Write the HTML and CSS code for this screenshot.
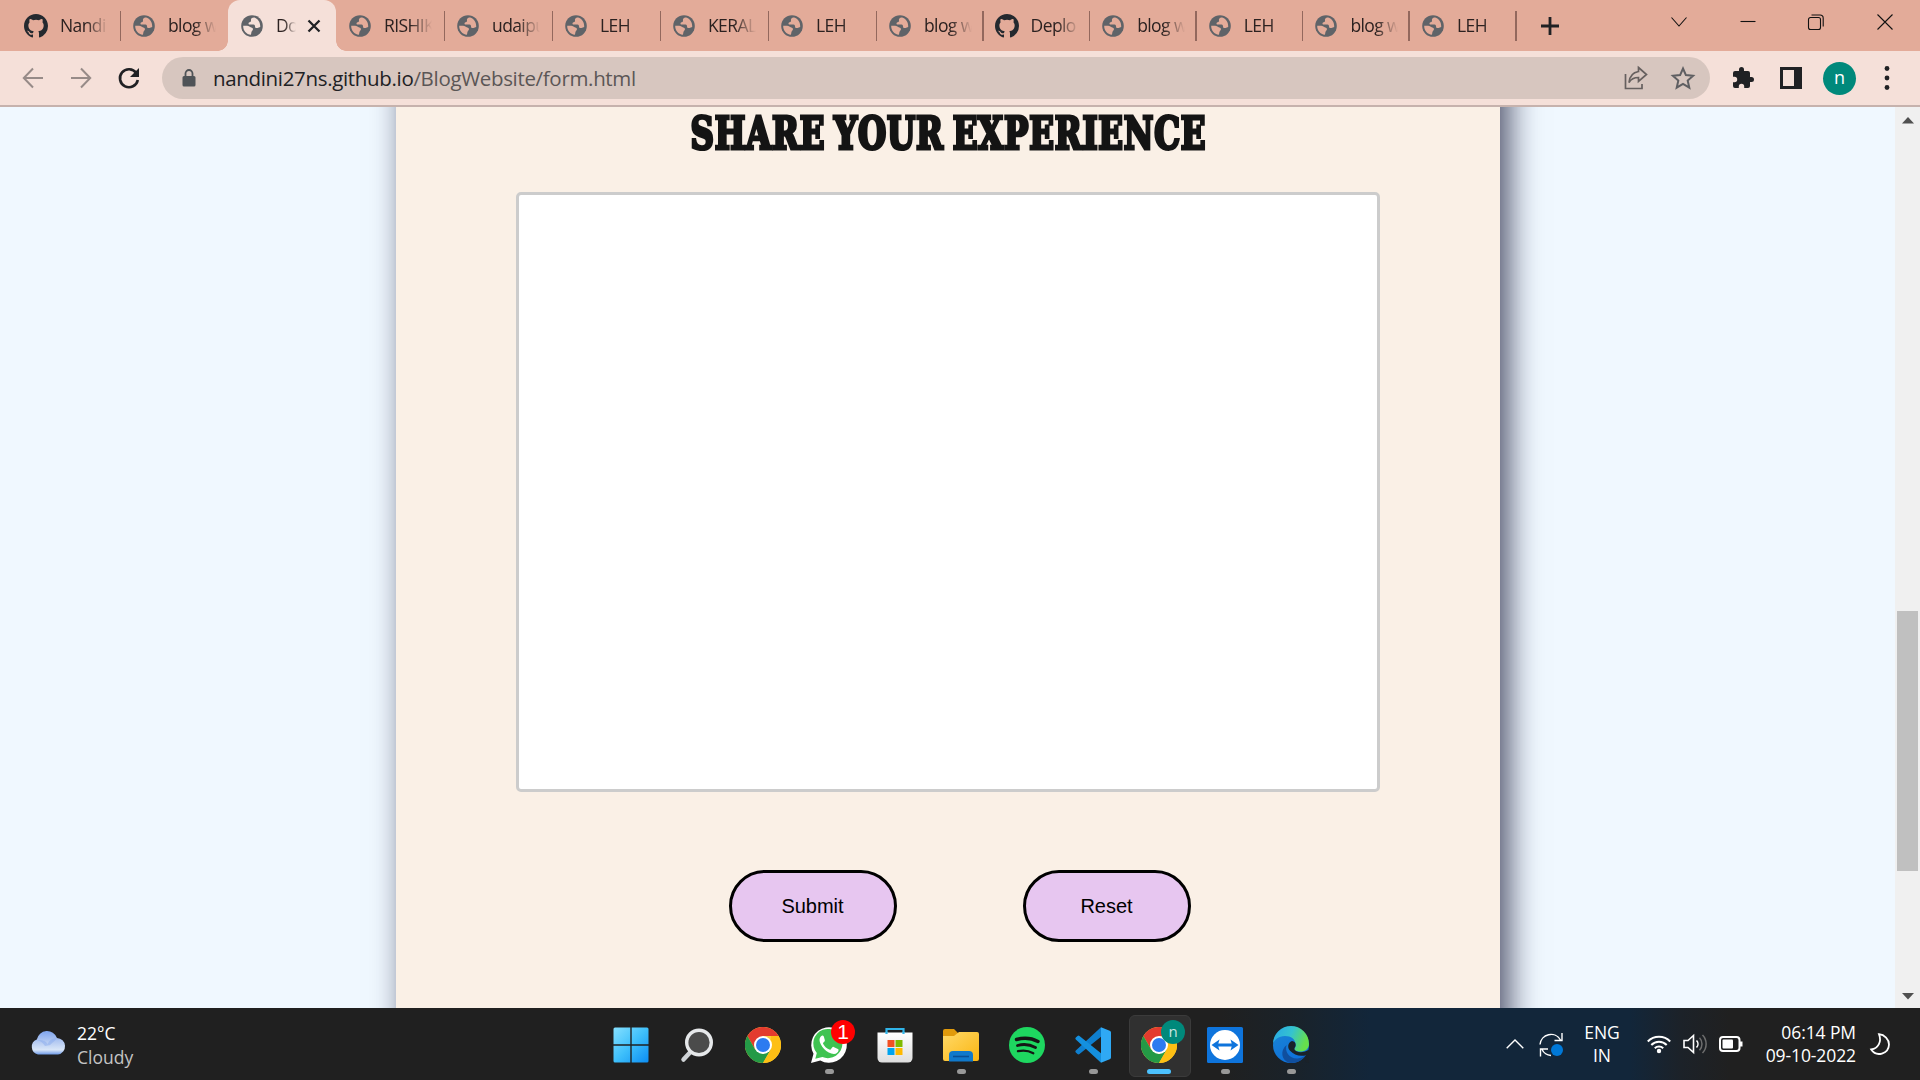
FILE: index.html
```html
<!DOCTYPE html>
<html lang="en">
<head>
<meta charset="utf-8">
<title>Document</title>
<link rel="stylesheet" href="styles.css">
</head>
<body>
<svg class="defs" aria-hidden="true">
  <defs>
    <symbol id="github" viewBox="0 0 16 16"><path fill="#24292f" d="M8 0C3.58 0 0 3.58 0 8c0 3.54 2.29 6.53 5.47 7.59.4.07.55-.17.55-.38 0-.19-.01-.82-.01-1.49-2.01.37-2.53-.49-2.69-.94-.09-.23-.48-.94-.82-1.13-.28-.15-.68-.52-.01-.53.63-.01 1.08.58 1.23.82.72 1.21 1.87.87 2.33.66.07-.52.28-.87.51-1.07-1.78-.2-3.64-.89-3.64-3.95 0-.87.31-1.59.82-2.15-.08-.2-.36-1.02.08-2.12 0 0 .67-.21 2.2.82a7.6 7.6 0 0 1 4 0c1.53-1.04 2.2-.82 2.2-.82.44 1.1.16 1.92.08 2.12.51.56.82 1.27.82 2.15 0 3.07-1.87 3.75-3.65 3.95.29.25.54.73.54 1.48 0 1.07-.01 1.93-.01 2.2 0 .21.15.46.55.38A8.01 8.01 0 0 0 16 8c0-4.42-3.58-8-8-8z"/></symbol>
    <symbol id="globe" viewBox="0 0 22 22"><circle cx="11" cy="11" r="10.8" fill="#5f6368"/><path class="land" d="M13.2 2.4c-3 .2-3.4 1.5-3.2 3 .1 1-.4 1.500-1.500 1.800-1.300.4-1.200 1.400-.6 2.300l4.600.1c1.300.1 1.500 1.300 1.600 2.300.2 1.200 1.400 1.400 2.400 1.100l2.700-1c.4-4.700-2.300-8.400-6-9.600zM2.200 10.800c-.2 4.600 3 8.500 7.700 9 .5-1.600.3-2.800.9-3.600.8-.9 1.500-1.600 1-2.700-.4-.7-1.300-.9-2.100-1.300-1.300-.7-2-1.500-3.500-1.500z"/></symbol>
    <symbol id="chrome" viewBox="0 0 36 36"><circle cx="18" cy="18" r="18" fill="#ffcd40"/><path fill="#e33b2e" d="M2.400 9A18 18 0 0 1 33.600 9H18L10.200 22.500z"/><path fill="#249a46" d="M2.400 9A18 18 0 0 0 18 36l7.800-13.500L18 27l-7.800-4.500z"/><path fill="#fdbf14" d="M33.600 9A18 18 0 0 1 18 36l7.800-13.500V9z"/><circle cx="18" cy="18" r="9" fill="#fff"/><circle cx="18" cy="18" r="7" fill="#2c7bf0"/></symbol>
    <linearGradient id="gWin" x1="0" y1="0" x2="1" y2="1"><stop offset="0" stop-color="#86e0ff"/><stop offset=".5" stop-color="#3fc0fb"/><stop offset="1" stop-color="#0b8df3"/></linearGradient>
    <linearGradient id="gCloud" x1="0" y1="0" x2="0" y2="1"><stop offset="0" stop-color="#7fa5ee"/><stop offset=".5" stop-color="#b9cdf2"/><stop offset=".8" stop-color="#d9e6f8"/><stop offset="1" stop-color="#6f9be8"/></linearGradient>
    <linearGradient id="gFolder" x1="0" y1="0" x2="1" y2="1"><stop offset="0" stop-color="#ffd968"/><stop offset="1" stop-color="#fbb612"/></linearGradient>
    <linearGradient id="gEdge" x1="0" y1="0" x2="1" y2=".3"><stop offset="0" stop-color="#26a6e8"/><stop offset=".55" stop-color="#35c3cf"/><stop offset="1" stop-color="#66e04c"/></linearGradient>
    <linearGradient id="gEdge2" x1="0" y1="0" x2=".6" y2="1"><stop offset="0" stop-color="#1b86d3"/><stop offset="1" stop-color="#0d6fdb"/></linearGradient>
    <linearGradient id="gBag" x1="0" y1="0" x2="0" y2="1"><stop offset="0" stop-color="#fff"/><stop offset="1" stop-color="#dedede"/></linearGradient>
  </defs>
</svg>

<div class="screen">
  <header class="tabstrip">
    <div class="tabs">
      <div class="tab"><svg class="fav gh"><use href="#github"/></svg><span class="title">Nandi</span></div>
      <div class="tab last"><svg class="fav"><use href="#globe"/></svg><span class="title">blog w</span></div>
      <div class="tab active"><svg class="fav"><use href="#globe"/></svg><span class="title">Do</span><svg class="close" viewBox="0 0 14 14"><path d="M1.500 1.500l11 11M12.500 1.500l-11 11"/></svg></div>
      <div class="tab"><svg class="fav"><use href="#globe"/></svg><span class="title">RISHIK</span></div>
      <div class="tab"><svg class="fav"><use href="#globe"/></svg><span class="title">udaipu</span></div>
      <div class="tab"><svg class="fav"><use href="#globe"/></svg><span class="title">LEH</span></div>
      <div class="tab"><svg class="fav"><use href="#globe"/></svg><span class="title">KERAL</span></div>
      <div class="tab"><svg class="fav"><use href="#globe"/></svg><span class="title">LEH</span></div>
      <div class="tab narrow"><svg class="fav"><use href="#globe"/></svg><span class="title">blog w</span></div>
      <div class="tab narrow"><svg class="fav gh"><use href="#github"/></svg><span class="title">Deplo</span></div>
      <div class="tab narrow"><svg class="fav"><use href="#globe"/></svg><span class="title">blog w</span></div>
      <div class="tab narrow"><svg class="fav"><use href="#globe"/></svg><span class="title">LEH</span></div>
      <div class="tab narrow"><svg class="fav"><use href="#globe"/></svg><span class="title">blog w</span></div>
      <div class="tab narrow"><svg class="fav"><use href="#globe"/></svg><span class="title">LEH</span></div>
    </div>
    <svg class="newtab" viewBox="0 0 18 18"><path d="M9 0v18M0 9h18"/></svg>
    <div class="winctl">
      <svg viewBox="0 0 16 16"><path d="M.5 3.500L8 12l7.500-8.500"/></svg>
      <svg viewBox="0 0 16 16"><path d="M.5 7.500h15"/></svg>
      <svg viewBox="0 0 16 16"><path d="M2.500 3.500h8a2 2 0 0 1 2 2v8a2 2 0 0 1-2 2h-8a2 2 0 0 1-2-2v-8a2 2 0 0 1 2-2zM3.500 1h8.500a3.200 3.200 0 0 1 3.200 3.200V12.500"/></svg>
      <svg viewBox="0 0 16 16"><path d="M.5.500l15 15M15.500.5l-15 15"/></svg>
    </div>
  </header>

  <div class="toolbar">
    <nav class="nav">
      <svg class="dim" viewBox="0 0 22 22"><path d="M21 11H2M11 1.500L1.800 11l9.200 9.500"/></svg>
      <svg class="dim" viewBox="0 0 22 22"><path d="M1 11h19M11 1.500l9.200 9.500-9.200 9.500"/></svg>
      <svg class="reload" viewBox="0 0 22 22"><path d="M18.300 6A9 9 0 1 0 19.800 13"/><path class="fill" d="M21 1v9h-9z"/></svg>
    </nav>
    <div class="omnibox">
      <svg class="lock" viewBox="0 0 14 18"><path fill="#4f5357" d="M2 7h10a1.500 1.500 0 0 1 1.500 1.500v7.500a1.500 1.500 0 0 1-1.500 1.500H2A1.500 1.500 0 0 1 .5 16V8.500A1.500 1.500 0 0 1 2 7z"/><path fill="none" stroke="#4f5357" stroke-width="1.800" d="M3.500 7V4.500a3.500 3.500 0 0 1 7 0V7"/></svg>
      <span class="url">nandini27ns.github.io<span class="path">/BlogWebsite/form.html</span></span>
      <svg class="share" viewBox="0 0 24 24"><path d="M1.500 8v14.500h16.500V18M14.500 1.500l8 7-8 7v-4c-5 0-7.500 1.500-9.500 5 .5-5.500 3.500-10 9.500-11z"/></svg>
      <svg class="star" viewBox="0 0 24 24"><path d="M12 2.500l2.900 6.600 7.200.7-5.400 4.800 1.600 7.100L12 18l-6.300 3.700 1.600-7.100L1.900 9.800l7.200-.7z"/></svg>
    </div>
    <div class="actions">
      <svg class="puzzle" viewBox="0 0 24 24"><path d="M20.500 11H19V7a2 2 0 0 0-2-2h-4V3.500a2.500 2.500 0 0 0-5 0V5H4a2 2 0 0 0-2 2v3.800h1.500a2.700 2.700 0 0 1 0 5.400H2V20a2 2 0 0 0 2 2h3.800v-1.500a2.700 2.700 0 0 1 5.400 0V22H17a2 2 0 0 0 2-2v-4h1.500a2.500 2.500 0 0 0 0-5z"/></svg>
      <svg class="panel" viewBox="0 0 22 22"><path d="M0 0h22v22H0zM3 3v16h11V3z" fill-rule="evenodd"/></svg>
      <span class="avatar">n</span>
      <svg class="dots" viewBox="0 0 6 26"><circle cx="3" cy="3.500" r="2.400"/><circle cx="3" cy="13" r="2.400"/><circle cx="3" cy="22.500" r="2.400"/></svg>
    </div>
  </div>

  <div class="viewport">
    <main class="page">
      <section class="card">
        <h1><span>SHARE YOUR EXPERIENCE</span></h1>
        <div class="textarea"></div>
        <div class="buttons"><button>Submit</button><button>Reset</button></div>
      </section>
    </main>
    <div class="scrollbar">
      <svg viewBox="0 0 12 7"><path d="M6 0l6 6.500H0z"/></svg>
      <div class="thumb"></div>
      <svg viewBox="0 0 12 7"><path d="M6 6.500L0 0h12z"/></svg>
    </div>
  </div>

  <footer class="taskbar">
    <div class="weather">
      <svg viewBox="0 0 36 24"><path fill="url(#gCloud)" d="M8 23.500a7.800 7.800 0 0 1-1.200-14.900A10.500 10.500 0 0 1 27 7a8.300 8.300 0 0 1 1 16.500z"/><path fill="#8aaced" opacity=".5" d="M7 9c5-.5 9 1 10.500 4 2-4 5-6 9.500-6-2 3-4 4-7 7l-5 1c-2-3-4-5-8-6z"/></svg>
      <div><div class="deg">22°C</div><div class="cond">Cloudy</div></div>
    </div>
    <div class="apps">
      <div class="app"><svg viewBox="0 0 36 36"><path fill="url(#gWin)" d="M2 .5h15.300v16.800H.5V2A1.500 1.500 0 0 1 2 .5zM18.700.5H34A1.500 1.500 0 0 1 35.500 2v15.300H18.700zM.5 18.700h16.800v16.800H2A1.500 1.500 0 0 1 .5 34zM18.700 18.700h16.800V34a1.500 1.500 0 0 1-1.500 1.500H18.700z"/></svg></div>
      <div class="app"><svg viewBox="0 0 36 36"><path stroke="#cfd3d6" stroke-width="4.500" stroke-linecap="round" d="M11 25.500l-6.500 7"/><circle cx="20" cy="15.500" r="12.300" fill="#4b4b4b" stroke="#e6e8ea" stroke-width="3.400"/></svg></div>
      <div class="app"><svg><use href="#chrome"/></svg></div>
      <div class="app run"><svg viewBox="0 0 36 36"><path fill="#fff" d="M0 36l2.500-9.300A17.800 17.800 0 1 1 9.300 33.500z"/><path fill="#3fc351" d="M4.300 31.700l1.500-5.600a14.600 14.600 0 1 1 5.600 4z"/><path fill="#fff" d="M12.800 9.500c-.5-1-1.300-1-2-.8-1 .5-2.300 2-2.300 4.300 0 5 7.500 14 14.500 14 2.500 0 4.300-2 4.500-3.500.1-.8 0-1.200-.6-1.500l-4.300-2c-.6-.3-1-.1-1.400.4l-1.600 2c-.4.400-.8.400-1.300.200-2.800-1.200-4.900-3.300-6.200-5.800-.2-.5-.1-.8.300-1.200 1-1.100 1.800-1.900 1.400-2.700z"/></svg><span class="badge red">1</span></div>
      <div class="app"><svg viewBox="0 0 36 36"><path fill="none" stroke="#30b4e8" stroke-width="2.200" d="M9.500 9V2h17v7"/><path fill="url(#gBag)" d="M.5 5.500h35V31a4.500 4.500 0 0 1-4.500 4.500H5A4.500 4.500 0 0 1 .5 31z"/><path fill="none" stroke="#30b4e8" stroke-width="2.200" d="M9.500 7V5M26.500 7V5"/><path fill="#f25022" d="M10.500 13h7v7h-7z"/><path fill="#7fba00" d="M18.500 13h7v7h-7z"/><path fill="#00a4ef" d="M10.500 21h7v7h-7z"/><path fill="#ffb900" d="M18.500 21h7v7h-7z"/></svg></div>
      <div class="app run"><svg viewBox="0 0 36 36"><path fill="#e09a0c" d="M0 4a2 2 0 0 1 2-2h9l4 4v6H0z"/><path fill="url(#gFolder)" d="M0 9h11l5-4h18a2 2 0 0 1 2 2v25a2 2 0 0 1-2 2H2a2 2 0 0 1-2-2z"/><path fill="#1079cb" d="M6 34.500V28a4 4 0 0 1 4-4h16a4 4 0 0 1 4 4v6.500z"/><path stroke="#0a4f94" stroke-width="1.600" d="M10 29.500h16"/></svg></div>
      <div class="app"><svg viewBox="0 0 36 36"><circle cx="18" cy="18" r="18" fill="#1ed760"/><path fill="none" stroke="#151515" stroke-linecap="round" stroke-width="3.400" d="M7.500 12.500c7-2 15-1.500 21.500 2"/><path fill="none" stroke="#151515" stroke-linecap="round" stroke-width="2.800" d="M8.500 18.500c6-1.700 12.500-1 18 2"/><path fill="none" stroke="#151515" stroke-linecap="round" stroke-width="2.300" d="M9 24.200c5.500-1.300 10.500-.7 15.300 2"/></svg></div>
      <div class="app run"><svg viewBox="0 0 36 36"><path fill="#0f7fcf" d="M.8 23.500L26 .3v9.500L4.500 27a1.500 1.500 0 0 1-2 0L.8 25.500a1.400 1.400 0 0 1 0-2z"/><path fill="#1490df" d="M.8 12.500L26 35.700v-9.500L4.500 9a1.500 1.500 0 0 0-2 0L.8 10.500a1.400 1.400 0 0 0 0 2z"/><path fill="#2fa9f4" d="M26 .3l8.700 3.400c.8.300 1.300 1 1.300 1.800v25c0 .8-.5 1.500-1.300 1.800L26 35.700z"/></svg></div>
      <div class="app current"><svg><use href="#chrome"/></svg><span class="badge teal">n</span></div>
      <div class="app run"><svg viewBox="0 0 36 36"><rect width="36" height="36" rx="1.500" fill="#0e74dc"/><circle cx="18" cy="18" r="15" fill="#fff"/><path fill="#0e74dc" d="M4.500 18l8-5.500-1.200 4h13.400l-1.200-4 8 5.500-8 5.500 1.200-4H11.300l1.200 4z"/></svg></div>
      <div class="app run"><svg viewBox="0 0 36 36"><circle cx="18" cy="18" r="18" fill="url(#gEdge2)"/><path fill="#104f9e" d="M13.500 18c-2 7 3 14 11 13.500 4-.2 7-2 8.800-4A18 18 0 0 1 17 36C8 34 7 23 13.500 18z"/><path fill="url(#gEdge)" d="M0 17A18 18 0 0 1 36 17c0 5-4 7.500-8.500 7.500-4 0-6.500-1.300-6.300-2.300.2-.8 1.500-1.500 1.500-4C22.700 12 18 9 12 9 5.500 9 1 13 0 17z"/><path fill="#1a2229" d="M21.300 22c.7 3 7.700 4.500 13 1.500.6-.3 1.300-.2 1.700.5V36l-4-1 1.800-7c-6 2-12.500.5-17-4.500-3.300-4-.8-9 2.200-9.500 2.500.2 3.700 2 3.700 4 0 1.800-1.200 2.500-1.400 4z"/></svg></div>
    </div>
    <div class="tray">
      <svg class="up" viewBox="0 0 18 10"><path d="M.7 9.300L9 1l8.300 8.300"/></svg>
      <svg class="sync" viewBox="0 0 24 24"><path d="M1 12.500A11 11 0 0 1 21.500 8M23 1v7.500h-7.500M12 23.500A11 11 0 0 1 3 17.500M1.500 24.500V17H9"/><circle cx="18" cy="18" r="6" fill="#0078d7" stroke="none"/></svg>
      <div class="lang">ENG<br>IN</div>
      <svg class="wifi" viewBox="0 0 24 20"><g stroke-width="2"><path d="M.8 7.500a15.500 15.500 0 0 1 22.400 0M4.300 11a10.800 10.800 0 0 1 15.400 0M7.800 14.300a6 6 0 0 1 8.400 0"/></g><circle cx="12" cy="17" r="2.200" fill="#fff" stroke="none"/></svg>
      <svg class="vol" viewBox="0 0 24 20"><path stroke-width="1.600" d="M1 6.500h4L10.500 1.500v17L5 13.500H1zM13.500 6.500a5 5 0 0 1 0 7"/><path stroke="#6e6e6e" stroke-width="1.500" d="M16.500 3.800a9 9 0 0 1 0 12.400M19.500 1a13 13 0 0 1 0 18"/></svg>
      <svg class="bat" viewBox="0 0 24 16"><rect x="1" y="1" width="19.500" height="14" rx="3" stroke-width="2"/><rect x="3.500" y="3.500" width="10.500" height="9" rx="1" fill="#fff" stroke="none"/><path stroke-width="3" d="M22 5.500v5"/></svg>
      <div class="clock"><span class="time">06:14 PM</span><br><span class="date">09-10-2022</span></div>
      <svg class="moon" viewBox="0 0 20 22"><path stroke-width="1.800" d="M9 1.200c5.500.5 10 5 10 10.300A9.700 9.700 0 0 1 1.200 16.500C8 15.500 12 9 9 1.200z"/></svg>
    </div>
  </footer>
</div>
</body>
</html>
```

FILE: styles.css
```css
* { box-sizing: border-box; }
body { margin: 0; overflow: hidden; font-family: "Open Sans", "Noto Sans", sans-serif; }
svg { display: block; flex: none; overflow: visible; }
.defs { position: absolute; width: 0; height: 0; }
.screen { width: 1920px; height: 1080px; display: flex; flex-direction: column; }

/* tab strip */
.tabstrip { height: 51px; background: #e3ab99; display: flex; align-items: center; padding-left: 12px; flex: none; --land: #e3ab99; }
.tabs { display: flex; height: 51px; }
.tab { position: relative; width: 108px; height: 51px; padding-left: 13px; display: flex; align-items: center; }
.tab.narrow { width: 106.600px; }
.tab::after { content: ""; position: absolute; right: -1px; top: 11px; width: 1.500px; height: 30px; background: #93685d; }
.tab.last::after { display: none; }
.fav { width: 22px; height: 22px; margin-right: 13px; }
.fav.gh { width: 24px; height: 24px; margin-left: -1px; margin-right: 12px; }
.land { fill: var(--land); }
.title { width: 56px; margin-top: -1px; white-space: nowrap; font-size: 17.500px; line-height: 26px; letter-spacing: -.6px; color: #2b2120; -webkit-mask-image: linear-gradient(90deg, #000 26px, transparent 48px); mask-image: linear-gradient(90deg, #000 26px, transparent 48px); }
.tab.active { background: #f5e0d9; border-radius: 12px 12px 0 0; --land: #f5e0d9; }
.tab.active .title { width: 24px; -webkit-mask-image: linear-gradient(90deg, #000 8px, transparent 20px); mask-image: linear-gradient(90deg, #000 8px, transparent 20px); }
.tab.active::before, .tab.active::after { content: ""; position: absolute; top: auto; bottom: 0; width: 10px; height: 10px; }
.tab.active::before { left: -10px; background: radial-gradient(circle at 0 0, transparent 9.500px, #f5e0d9 10px); }
.tab.active::after { right: -10px; background: radial-gradient(circle at 100% 0, transparent 9.500px, #f5e0d9 10px); }
.close { width: 14px; height: 14px; margin-left: 7px; stroke: #202124; stroke-width: 2.300; }
.newtab { width: 18px; height: 18px; margin-left: 25px; stroke: #202124; stroke-width: 2.800; }
.winctl { margin-left: auto; display: flex; gap: 52.600px; padding: 0 27px 8px 0; }
.winctl svg { width: 16px; height: 16px; fill: none; stroke: #111; stroke-width: 1.100; }

/* toolbar */
.toolbar { height: 56px; flex: none; background: #f5e0d9; border-bottom: 2px solid #c6b2ad; display: flex; align-items: center; padding-left: 22px; }
.nav { display: flex; gap: 26px; width: 140px; }
.nav svg { width: 22px; height: 22px; fill: none; stroke: #202124; stroke-width: 2.600; }
.nav .dim { stroke: #978b88; stroke-width: 2; }
.nav .fill { fill: #202124; stroke: none; }
.omnibox { width: 1548px; height: 42px; border-radius: 21px; background: #d7c6bf; display: flex; align-items: center; padding: 0 15px 0 20px; }
.lock { width: 14px; height: 18px; }
.url { flex: 1; padding-left: 17px; font-size: 20.500px; letter-spacing: -.33px; color: #202124; white-space: nowrap; }
.path { color: #5b5656; }
.share { width: 24px; height: 24px; margin-right: 23px; fill: none; stroke: #66605f; stroke-width: 1.700; }
.star { width: 24px; height: 24px; fill: none; stroke: #5f5f62; stroke-width: 2; }
.actions { flex: 1; display: flex; align-items: center; padding-left: 21px; fill: #202124; }
.puzzle { width: 24px; height: 24px; }
.panel { width: 22px; height: 22px; margin-left: 25px; }
.avatar { width: 33px; height: 33px; margin-left: 21px; border-radius: 50%; background: #00897b; color: #fff; font-size: 18px; line-height: 31px; text-align: center; }
.dots { width: 6px; height: 26px; margin-left: 28px; }

/* page */
.viewport { height: 901px; flex: none; display: flex; }
.page { flex: 1; background: #f0f8ff; overflow: hidden; padding-left: 396px; }
.card { width: 1104px; height: 1060px; margin-top: -60px; padding-top: 60px; background: #faf0e6; box-shadow: 9px 0 30px rgba(8, 10, 42, .7); display: flex; flex-direction: column; align-items: center; }
h1 { margin: 0; width: 800px; height: 85px; display: flex; justify-content: center; font-family: "DejaVu Serif Condensed", "DejaVu Serif", serif; font-stretch: condensed; font-weight: 700; font-size: 45px; line-height: 53px; color: #141414; white-space: nowrap; }
h1 span { flex: none; height: 53px; transform: scaleX(.8); letter-spacing: 1px; word-spacing: -4px; -webkit-text-stroke: 3.200px #141414; }
.textarea { width: 864px; height: 600px; background: #fff; border: 3px solid #ccc; border-radius: 5px; }
.buttons { display: flex; gap: 126px; margin-top: 78px; padding-left: 24px; }
button { width: 168px; height: 72px; padding: 0 1px 0 0; border: 3px solid #000; border-radius: 36px; background: #e7c6f0; font: 20px "Liberation Sans", Arial, sans-serif; color: #000; }
.scrollbar { width: 25px; background: #f0f0f0; display: flex; flex-direction: column; align-items: center; padding: 10px 0 8px; }
.scrollbar svg { width: 12px; height: 7px; fill: #505050; }
.thumb { width: 21px; height: 260px; margin: 487px 0 auto; background: #c0c0c0; }

/* taskbar */
.taskbar { height: 72px; flex: none; background: linear-gradient(90deg, #202020 1220px, #1a2229 1290px, #12263a 1370px, #12263a 1630px, #1c2229 1680px, #202020 1730px); display: flex; color: #fff; font-size: 17.500px; }
.weather { width: 598px; padding: 13px 0 0 30px; display: flex; gap: 11px; line-height: 24px; }
.weather svg { width: 36px; height: 24px; margin-top: 10px; }
.cond { color: #c4c4c4; }
.apps { display: flex; }
.app { position: relative; width: 66px; height: 72px; display: flex; justify-content: center; padding-top: 19px; }
.app svg { width: 36px; height: 36px; position: relative; }
.run::after, .current::after { content: ""; position: absolute; left: 28.500px; top: 61px; width: 9px; height: 5px; border-radius: 3px; background: #989898; }
.current::before { content: ""; position: absolute; left: 3px; top: 7px; width: 60px; height: 60px; border-radius: 6px; background: #303030; border: 1px solid #3b3b3b; }
.current::after { left: 21px; width: 24px; background: #4cc2ff; }
.badge { position: absolute; left: 35px; top: 12px; width: 24px; height: 24px; border-radius: 50%; text-align: center; line-height: 24px; }
.red { background: #f00; font: 21px/24px "Liberation Sans", Arial, sans-serif; }
.teal { background: #00897b; font-size: 15px; line-height: 22px; color: #c9e5e1; }
.tray { flex: 1; position: relative; display: flex; align-items: center; padding: 0 30px 0 0; justify-content: flex-end; fill: none; stroke: #fff; stroke-width: 1.400; }
.tray div { line-height: 23px; stroke: none; }
.up { width: 18px; height: 10px; margin-right: 15px; }
.sync { width: 24px; height: 24px; margin-right: 18px; }
.lang { width: 42px; text-align: center; margin-right: 24px; }
.wifi { width: 24px; height: 20px; margin-right: 12px; }
.vol { width: 24px; height: 20px; margin-right: 12px; }
.bat { width: 24px; height: 16px; }
.clock { width: 113px; text-align: right; letter-spacing: -.1px; }
.moon { width: 20px; height: 22px; margin-left: 14px; }
```
